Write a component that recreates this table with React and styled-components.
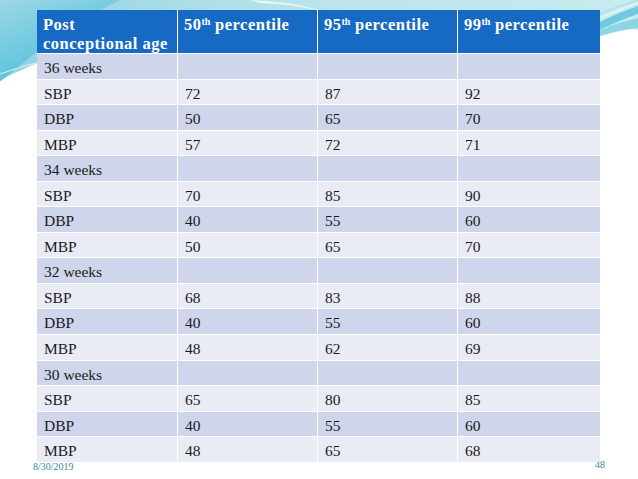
import React from "react";
import styled, { createGlobalStyle } from "styled-components";

const Global = createGlobalStyle`
  html, body { margin: 0; padding: 0; background: #ffffff; }
  body { width: 638px; height: 479px; overflow: hidden; font-family: "Liberation Serif", "Times New Roman", serif; }
`;

const Slide = styled.div`
  position: relative;
  width: 638px;
  height: 479px;
  box-sizing: border-box;
  padding: 10px 0 0 37px;
  background: #ffffff;
`;

const Decor = styled.svg`
  position: absolute;
  left: 0;
  top: 0;
  z-index: 0;
`;

const Table = styled.div`
  position: relative;
  z-index: 2;
  display: grid;
  grid-template-columns: 140px 139px 139px 142px;
  grid-template-rows: 43px repeat(16, 24.55px);
  gap: 1px;
  width: 563px;
  background: #ffffff;
`;

const HeadCell = styled.div`
  background: #166ac3;
  color: #ffffff;
  font-weight: bold;
  font-size: 16.5px;
  letter-spacing: 0.5px;
  line-height: 19px;
  padding: 5px 6px 0 6px;
  box-sizing: border-box;
`;

const Cell = styled.div`
  background: ${(p) => (p.$dark ? "#cfd5ea" : "#e9ebf5")};
  color: #1b1b1b;
  font-size: 15.5px;
  line-height: 18px;
  padding: 5px 7px 0 7px;
  box-sizing: border-box;
`;

const Sup = styled.sup`
  font-size: 10px;
  line-height: 0;
  letter-spacing: 0;
  vertical-align: 5px;
`;

const DateText = styled.div`
  position: absolute;
  left: 33px;
  top: 461px;
  z-index: 1;
  font-size: 10px;
  line-height: 11px;
  color: #3f8896;
`;

const PageNum = styled.div`
  position: absolute;
  left: 595px;
  top: 459px;
  z-index: 1;
  font-size: 10px;
  line-height: 11px;
  color: #3f8896;
`;

const groups = [
  { label: "36 weeks", rows: [["SBP", "72", "87", "92"], ["DBP", "50", "65", "70"], ["MBP", "57", "72", "71"]] },
  { label: "34 weeks", rows: [["SBP", "70", "85", "90"], ["DBP", "40", "55", "60"], ["MBP", "50", "65", "70"]] },
  { label: "32 weeks", rows: [["SBP", "68", "83", "88"], ["DBP", "40", "55", "60"], ["MBP", "48", "62", "69"]] },
  { label: "30 weeks", rows: [["SBP", "65", "80", "85"], ["DBP", "40", "55", "60"], ["MBP", "48", "65", "68"]] },
];

const rows = [];
groups.forEach((g) => {
  rows.push([g.label, "", "", ""]);
  g.rows.forEach((r) => rows.push(r));
});

export default function App() {
  return (
    <>
      <Global />
      <Slide>
        <Decor width="638" height="100" viewBox="0 0 638 100">
          <defs>
            <linearGradient id="band" x1="0" y1="0" x2="1" y2="0">
              <stop offset="0" stopColor="#8fd3e3" />
              <stop offset="0.45" stopColor="#b9e3ea" />
              <stop offset="1" stopColor="#c6ecef" />
            </linearGradient>
            <linearGradient id="wedge" x1="0" y1="0" x2="0.6" y2="1">
              <stop offset="0" stopColor="#9ed8e6" />
              <stop offset="1" stopColor="#3fbad9" />
            </linearGradient>
          </defs>
          <path d="M0,0 H638 V30 Q450,12 300,10 Q120,20 0,80 Z" fill="url(#band)" />
          <path d="M0,0 H120 Q60,30 0,82 Z" fill="url(#wedge)" opacity="0.9" />
          <path d="M0,82 Q40,65 110,55" stroke="#ffffff" strokeWidth="1.2" fill="none" />
          <path d="M0,74 Q50,55 120,50" stroke="#d8f2f6" strokeWidth="1" fill="none" />
          <path d="M250,0 Q300,2 330,14 Q300,4 260,3 Z" fill="#eaf8fa" />
          <path d="M600,22 Q620,12 638,6 V14 Q620,20 600,30 Z" fill="#6fcadf" />
          <path d="M600,30 Q620,22 638,18 V28 Q620,30 600,36 Z" fill="#8bd5e5" />
          <path d="M595,16 Q618,6 638,0" stroke="#9ad9e6" strokeWidth="1" fill="none" />
          <path d="M598,19 Q618,10 638,3" stroke="#ffffff" strokeWidth="0.8" fill="none" />
        </Decor>
        <DateText>8/30/2019</DateText>
        <PageNum>48</PageNum>
        <Table>
          <HeadCell>Post<br />conceptional age</HeadCell>
          <HeadCell>50<Sup>th</Sup> percentile</HeadCell>
          <HeadCell>95<Sup>th</Sup> percentile</HeadCell>
          <HeadCell>99<Sup>th</Sup> percentile</HeadCell>
          {rows.map((r, i) =>
            r.map((c, j) => (
              <Cell key={`${i}-${j}`} $dark={i % 2 === 0}>{c}</Cell>
            ))
          )}
        </Table>
      </Slide>
    </>
  );
}
